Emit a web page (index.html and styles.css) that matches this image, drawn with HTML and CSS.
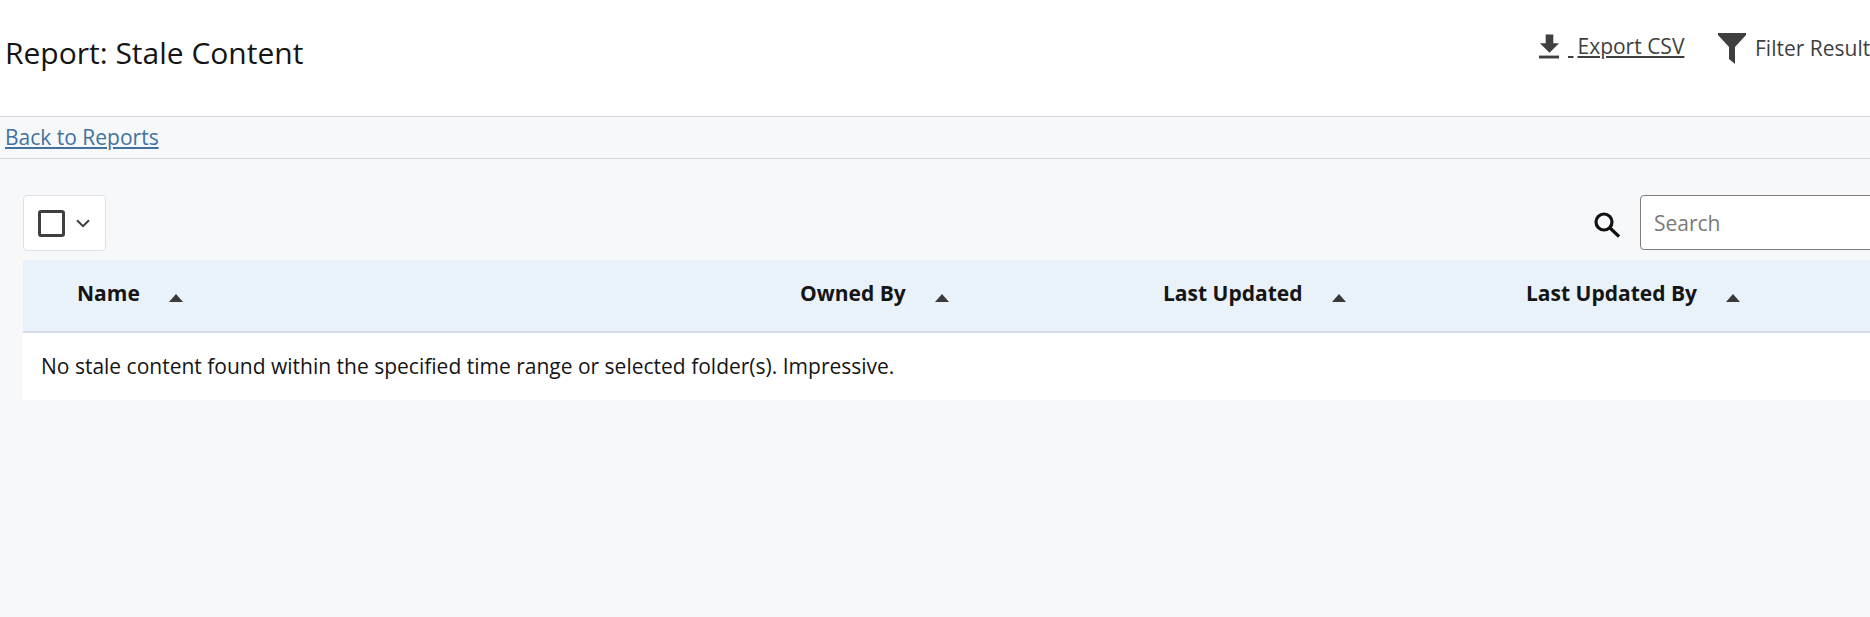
FILE: index.html
```html
<!DOCTYPE html>
<html lang="en">
<head>
<meta charset="utf-8">
<title>Report: Stale Content</title>
<link rel="stylesheet" href="styles.css">
</head>
<body>
<header class="top">
  <h1 class="title">Report: Stale Content</h1>
  <div class="actions">
    <a class="export" href="#"><svg class="ic-dl" viewBox="0 0 22 26"><path d="M7 0h8v9h6L11 19 1 9h6z"/><rect x="0" y="22" width="21" height="3"/></svg><span class="gap">&nbsp;</span><span class="export-label">Export CSV</span></a>
    <div class="filter"><svg class="ic-filter" viewBox="0 0 28 31"><path d="M0 0h28v2L17 14v17l-6-5V14L0 2z"/></svg><span>Filter Results</span></div>
  </div>
</header>
<nav class="crumb"><a href="#">Back to Reports</a></nav>
<main class="content">
  <div class="toolbar">
    <button class="select" type="button">
      <span class="box"></span>
      <svg class="chev" viewBox="0 0 14 9"><path d="M1 1.200 7 7.200l6-6" fill="none" stroke="#3d3d3d" stroke-width="2"/></svg>
    </button>
    <div class="search">
      <svg class="ic-search" viewBox="0 0 26 26"><circle cx="10" cy="10" r="8" fill="none" stroke="#111" stroke-width="3.200"/><path d="m15.500 15.500 9.500 9" stroke="#111" stroke-width="3.200" fill="none"/></svg>
      <input class="input" type="text" placeholder="Search">
    </div>
  </div>
  <div class="table">
    <div class="thead">
      <div class="th">Name<i class="up"></i></div>
      <div class="th">Owned By<i class="up"></i></div>
      <div class="th">Last Updated<i class="up"></i></div>
      <div class="th">Last Updated By<i class="up"></i></div>
    </div>
    <div class="row">No stale content found within the specified time range or selected folder(s). Impressive.</div>
  </div>
</main>
</body>
</html>
```
FILE: styles.css
```css
* { box-sizing: border-box; }
html, body { margin: 0; height: 100%; overflow: hidden; }
body { width: 1870px; background: #f7f8fa; font-family: "Open Sans", sans-serif; color: #151515; font-size: 21px; }
.top { height: 117px; background: #fff; border-bottom: 1px solid #d5d8e0; display: flex; justify-content: space-between; align-items: flex-start; overflow: hidden; }
.title { margin: 33px 0 0 5px; font-size: 30px; line-height: 40px; font-weight: 400; }
.actions { display: flex; align-items: flex-start; width: 332px; flex: none; white-space: nowrap; color: #3f3f3f; margin-right: -1px; }
.export { display: flex; flex: none; color: #3f3f3f; text-decoration: underline; margin-top: 33px; width: 179px; }
.export-label { line-height: 26px; }
.gap { margin-left: 8px; margin-right: 4px; line-height: 26px; }
.ic-dl { width: 21px; height: 26px; margin-top: 1px; fill: #3f3f3f; flex: none; }
.filter { display: flex; flex: none; align-items: flex-start; margin-top: 33px; }
.filter span { margin: 1px 0 0 9px; line-height: 28px; }
.ic-filter { width: 28px; height: 31px; fill: #3f3f3f; flex: none; }
.crumb { height: 42px; border-bottom: 1px solid #d5d8e0; padding: 6px 0 0 5px; line-height: 28px; }
.crumb a { color: #41729f; }
.content { padding: 36px 0 0 23px; width: 1900px; }
.toolbar { display: flex; justify-content: space-between; height: 65px; width: 1877px; }
.select { width: 83px; height: 56px; background: #fff; border: 1px solid #dfe1e6; border-radius: 4px; display: flex; align-items: center; padding: 0 0 0 14px; margin: 0; }
.box { width: 27px; height: 27px; border: 3px solid #3f3f3f; border-radius: 3px; background: #fff; }
.chev { width: 14px; height: 9px; margin-left: 11px; }
.search { display: flex; align-items: flex-start; }
.ic-search { width: 26px; height: 26px; margin: 17px 20px 0 0; }
.input { width: 260px; height: 55px; border: 1px solid #7d7d7d; border-radius: 4px; background: #fff; padding: 0 13px; font: 21px "Open Sans", sans-serif; }
.input::placeholder { color: #7a7a7a; opacity: 1; }
.table { width: 1877px; }
.thead { display: grid; grid-template-columns: 777px 363px 363px 1fr; height: 73px; background: #e9f1f9; border-bottom: 2px solid #d5dde8; font-weight: 700; }
.th { padding-top: 19px; line-height: 28px; display: flex; align-items: flex-start; }
.th:first-child { padding-left: 54px; }
.up { width: 0; height: 0; margin: 15px 0 0 29px; border-left: 7.500px solid transparent; border-right: 7.500px solid transparent; border-bottom: 8px solid #3a3a3a; }
.row { height: 67px; background: #fff; padding: 19px 0 0 18px; line-height: 28px; }
```
